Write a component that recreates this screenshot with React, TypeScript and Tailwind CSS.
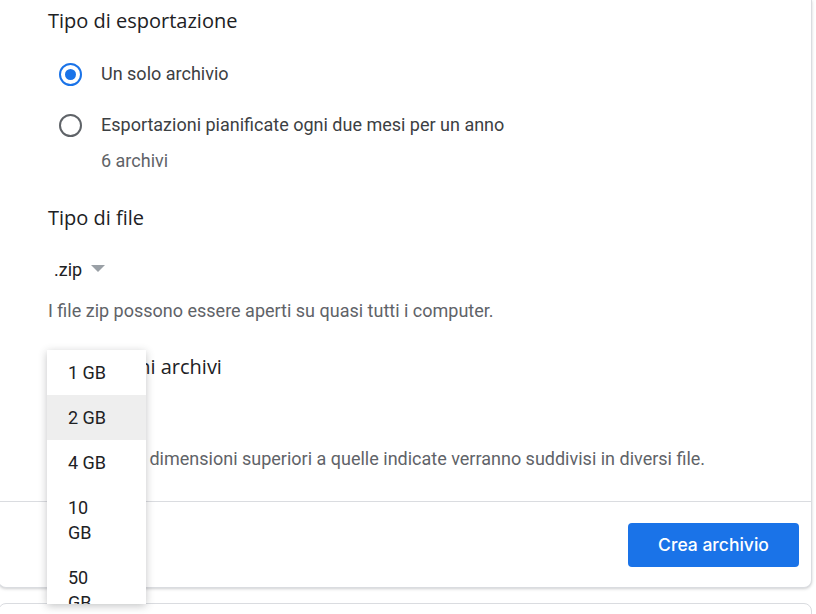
import React from "react";

const sizes = [
  { lines: ["1 GB"], active: false },
  { lines: ["2 GB"], active: true },
  { lines: ["4 GB"], active: false },
  { lines: ["10", "GB"], active: false },
  { lines: ["50", "GB"], active: false },
];

function Radio({ checked }: { checked: boolean }) {
  return (
    <span
      className={`flex h-[23px] w-[23px] shrink-0 items-center justify-center rounded-full border-[2.5px] ${
        checked ? "border-[#1a73e8]" : "border-[#5f6368]"
      }`}
    >
      {checked && <span className="h-[11px] w-[11px] rounded-full bg-[#1a73e8]"></span>}
    </span>
  );
}

export default function App() {
  return (
    <div className="relative h-[614px] w-[816px] overflow-hidden bg-white font-['Roboto',sans-serif] text-[18px] text-[#3c4043]">
      <div className="ml-[-2px] w-[814px] rounded-b-lg border-x border-b border-[#dadce0] bg-white shadow-[0_1px_3px_rgba(60,64,67,0.25)]">
        <div className="pl-[49px] pt-[9px]">
          {/* Tipo di esportazione */}
          <h3 className="h-6 font-['Open_Sans',sans-serif] text-[20px] leading-6 text-[#202124]">Tipo di esportazione</h3>

          <label className="mt-[29px] flex h-6 items-center">
            <span className="ml-[11px] mr-[19px]">
              <Radio checked />
            </span>
            <span className="leading-6">Un solo archivio</span>
          </label>

          <label className="mt-[27px] flex h-6 items-center">
            <span className="ml-[11px] mr-[19px]">
              <Radio checked={false} />
            </span>
            <span className="leading-6">Esportazioni pianificate ogni due mesi per un anno</span>
          </label>

          <p className="mt-[12px] h-6 pl-[53px] leading-6 text-[#5f6368]">6 archivi</p>

          {/* Tipo di file */}
          <h3 className="mt-[33px] h-6 font-['Open_Sans',sans-serif] text-[20px] leading-6 text-[#202124]">Tipo di file</h3>

          <div className="mt-[28px] flex h-6 items-center pl-[6px]">
            <span className="leading-6 text-[#202124]">.zip</span>
            <svg className="ml-[9px] mt-[-3px]" width="14" height="7" viewBox="0 0 14 7">
              <path d="M0 0h14L7 7z" fill="#9aa0a6" />
            </svg>
          </div>

          <p className="mt-[17px] h-6 leading-6 text-[#5f6368]">I file zip possono essere aperti su quasi tutti i computer.</p>

          {/* Dimensioni archivi */}
          <h3 className="mt-[32px] h-6 pl-[2px] font-['Open_Sans',sans-serif] text-[20px] leading-6 text-[#202124]">Dimensioni archivi</h3>

          <div className="mt-[24px] flex h-6 items-center pl-[6px]">
            <span className="leading-6 text-[#202124]">2 GB</span>
          </div>

          <p className="mt-[20px] h-6 leading-6 text-[#5f6368]">
            Gli archivi di dimensioni superiori a quelle indicate verranno suddivisi in diversi file.
          </p>
        </div>

        <div className="mt-[30px] flex justify-end border-t border-[#dadce0] pb-[20px] pr-[12px] pt-[21px]">
          <button className="h-[44px] w-[171px] rounded-[4px] bg-[#1a73e8] font-['Inter',sans-serif] text-[17.5px] font-medium text-white">
            Crea archivio
          </button>
        </div>
      </div>

      <div className="ml-[-2px] mt-[15px] h-[40px] w-[814px] rounded-t-lg border border-[#dadce0] bg-white"></div>

      {/* menu a tendina */}
      <div className="absolute left-[47px] top-[350px] h-[254px] w-[99px] overflow-hidden bg-white shadow-[0_2px_8px_rgba(60,64,67,0.3)]">
        {sizes.map((s) => (
          <div
            key={s.lines.join(" ")}
            className={`py-[10px] pl-[21px] pr-3 leading-[25px] text-[#202124] ${s.active ? "bg-[#eeeeee]" : ""}`}
          >
            {s.lines.map((l) => (
              <div key={l}>{l}</div>
            ))}
          </div>
        ))}
      </div>
    </div>
  );
}
